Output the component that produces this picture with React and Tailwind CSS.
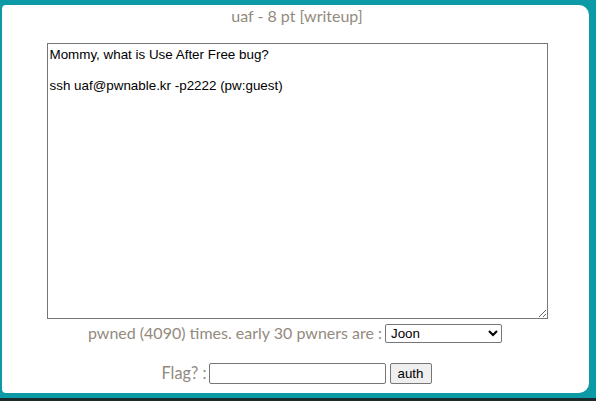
export default function App() {
  const text = 'Mommy, what is Use After Free bug?\n\nssh uaf@pwnable.kr -p2222 (pw:guest)';
  return (
    <div className="w-[596px] h-[401px] bg-[#0c9aa6] overflow-hidden relative">
      <div className="absolute left-0 right-0 bottom-0 h-[3px] bg-[#1d2a2c]" />
      <div
        className="ml-[2px] mt-[5px] w-[587px] h-[388px] bg-white rounded-tr-[10px] rounded-br-[10px] rounded-tl-[4px] rounded-bl-[4px] flex flex-col items-center text-[#938a7e]"
        style={{ fontFamily: 'Lato, "Open Sans", sans-serif' }}
      >
        <div className="mt-[1px] ml-[3px] h-[20px] leading-[20px] text-[16px]">uaf - 8 pt [writeup]</div>
        <textarea
          readOnly
          defaultValue={text}
          className="mt-[17px] ml-[3px] w-[501px] h-[276px] border border-[#767676] px-[2px] pt-[3px] text-[13.4px] leading-[15.5px] text-black resize-y outline-none"
          style={{ fontFamily: 'Arial, "Liberation Sans", sans-serif' }}
        />
        <div className="mt-[4px] flex items-center h-[20px] text-[16px] ml-[-1px]">
          <span>pwned (4090) times. early 30 pwners are :</span>
          <select
            className="ml-[3px] w-[117px] h-[19px] border border-[#767676] rounded-[2px] text-[13.33px] text-black bg-white px-[1px]"
            style={{ fontFamily: 'Arial, "Liberation Sans", sans-serif' }}
            defaultValue="Joon"
          >
            <option>Joon</option>
          </select>
        </div>
        <div className="mt-[20px] flex items-center h-[21px] text-[16.3px] ml-[2px]">
          <span>Flag? :</span>
          <input
            className="ml-[2px] w-[177px] h-[21px] border border-[#767676] rounded-[2px] bg-white"
          />
          <button
            className="ml-[4px] h-[21px] w-[42px] border border-[#767676] rounded-[2px] bg-[#efefef] text-[13.33px] text-black"
            style={{ fontFamily: 'Arial, "Liberation Sans", sans-serif' }}
          >
            auth
          </button>
        </div>
      </div>
    </div>
  );
}
